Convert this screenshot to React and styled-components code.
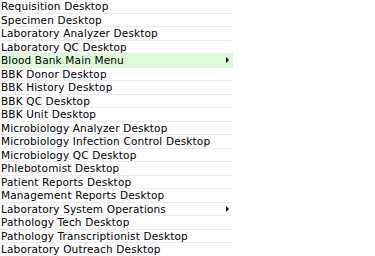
import React from "react";
import styled, { createGlobalStyle } from "styled-components";

const GlobalStyle = createGlobalStyle`
  body {
    margin: 0;
    background: #ffffff;
    font-family: "DejaVu Sans", Verdana, sans-serif;
  }
`;

const items = [
  { label: "Requisition Desktop" },
  { label: "Specimen Desktop" },
  { label: "Laboratory Analyzer Desktop" },
  { label: "Laboratory QC Desktop" },
  { label: "Blood Bank Main Menu", sub: true, active: true },
  { label: "BBK Donor Desktop" },
  { label: "BBK History Desktop" },
  { label: "BBK QC Desktop" },
  { label: "BBK Unit Desktop" },
  { label: "Microbiology Analyzer Desktop" },
  { label: "Microbiology Infection Control Desktop" },
  { label: "Microbiology QC Desktop" },
  { label: "Phlebotomist Desktop" },
  { label: "Patient Reports Desktop" },
  { label: "Management Reports Desktop" },
  { label: "Laboratory System Operations", sub: true },
  { label: "Pathology Tech Desktop" },
  { label: "Pathology Transcriptionist Desktop" },
  { label: "Laboratory Outreach Desktop" },
];

const App = () => {
  return (
    <>
      <GlobalStyle />
      <Menu>
        {items.map((item, index) => (
          <Item key={index} $active={item.active}>
            <Label>{item.label}</Label>
            {item.sub && <Arrow />}
          </Item>
        ))}
      </Menu>
    </>
  );
};

const Menu = styled.ul`
  list-style: none;
  margin: 0;
  padding: 0;
  width: 233px;
`;

const Item = styled.li`
  height: 13.5px;
  box-sizing: border-box;
  display: flex;
  align-items: center;
  justify-content: space-between;
  padding: 0 4px 0 1px;
  border-bottom: 1px solid #ececec;
  background-color: ${(p) => (p.$active ? "#dcfcd8" : "transparent")};
  cursor: pointer;
`;

const Label = styled.span`
  font-size: 10.5px;
  line-height: 12px;
  color: #000;
  white-space: nowrap;
  letter-spacing: 0.15px;
`;

const Arrow = styled.span`
  width: 0;
  height: 0;
  border-top: 3px solid transparent;
  border-bottom: 3px solid transparent;
  border-left: 3px solid #000;
`;

export default App;
